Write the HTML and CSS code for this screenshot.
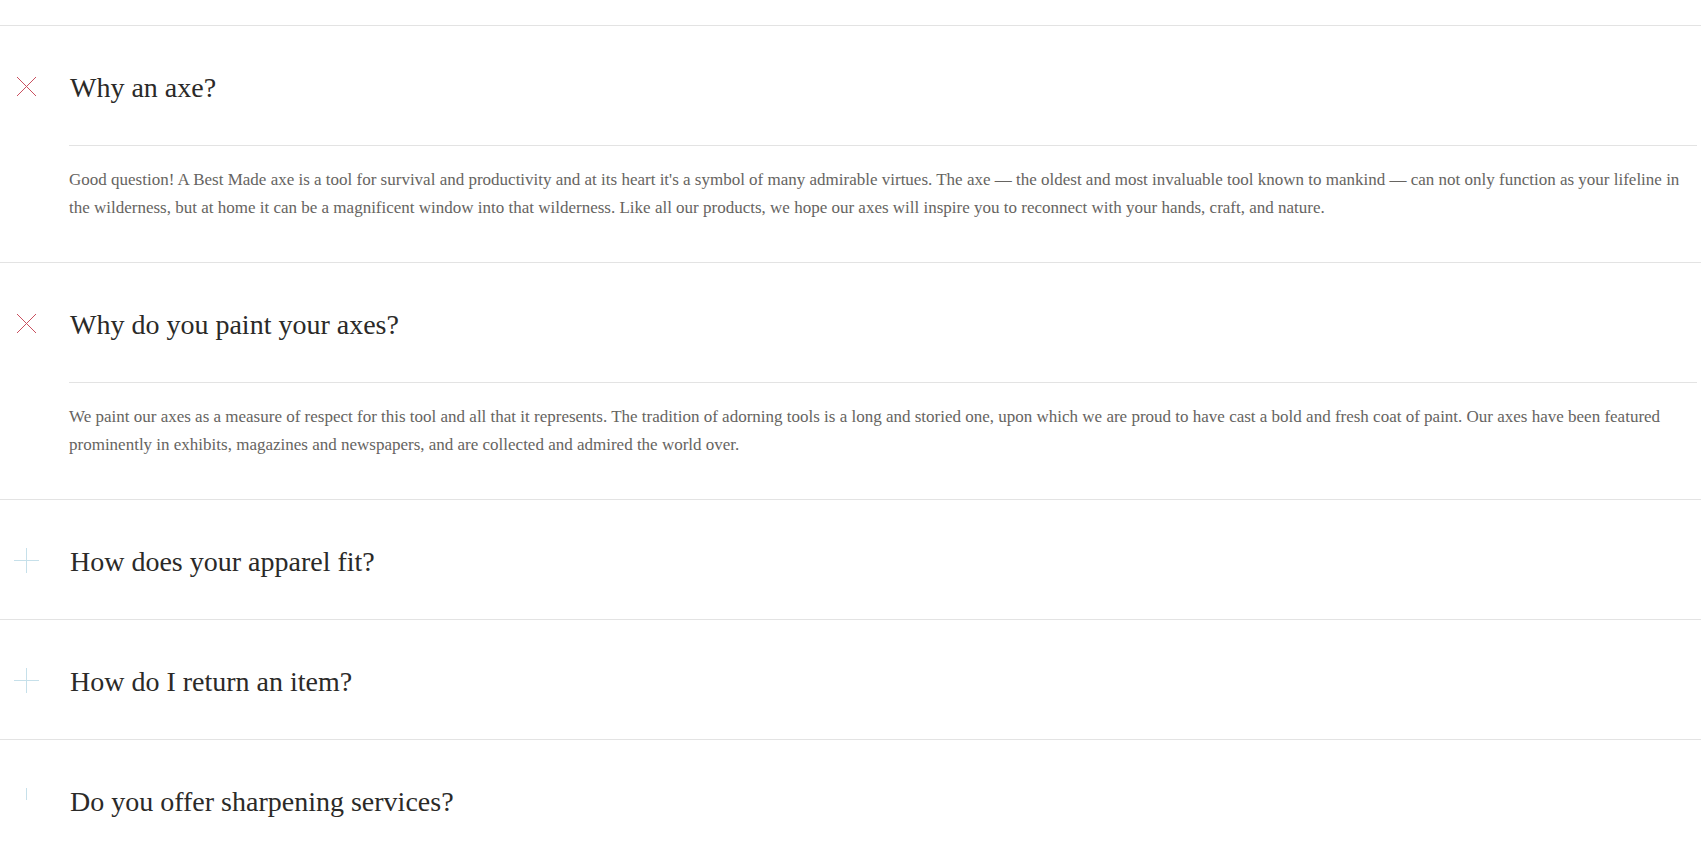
FILE: index.html
```html
<!DOCTYPE html>
<html lang="en">
<head>
    <meta charset="UTF-8">
    <meta name="viewport" content="width=device-width, initial-scale=1.0">
    <title>FAQ</title>
    <link rel="stylesheet" href="styles.css">
</head>
<body>
    <div class="faq">
        <div class="item open">
            <div class="question">
                <svg class="icon close" viewBox="0 0 25 25"><path d="M3 3 L22 22 M22 3 L3 22"/></svg>
                <h3>Why an axe?</h3>
            </div>
            <div class="answer">
                <p>Good question! A Best Made axe is a tool for survival and productivity and at its heart it's a symbol of many admirable virtues. The axe &mdash; the oldest and most invaluable tool known to mankind &mdash; can not only function as your lifeline in the wilderness, but at home it can be a magnificent window into that wilderness. Like all our products, we hope our axes will inspire you to reconnect with your hands, craft, and nature.</p>
            </div>
        </div>

        <div class="item open">
            <div class="question">
                <svg class="icon close" viewBox="0 0 25 25"><path d="M3 3 L22 22 M22 3 L3 22"/></svg>
                <h3>Why do you paint your axes?</h3>
            </div>
            <div class="answer">
                <p>We paint our axes as a measure of respect for this tool and all that it represents. The tradition of adorning tools is a long and storied one, upon which we are proud to have cast a bold and fresh coat of paint. Our axes have been featured prominently in exhibits, magazines and newspapers, and are collected and admired the world over.</p>
            </div>
        </div>

        <div class="item">
            <div class="question">
                <svg class="icon plus" viewBox="0 0 25 25"><path d="M12.5 0 V25 M0 12.5 H25"/></svg>
                <h3>How does your apparel fit?</h3>
            </div>
        </div>

        <div class="item">
            <div class="question">
                <svg class="icon plus" viewBox="0 0 25 25"><path d="M12.5 0 V25 M0 12.5 H25"/></svg>
                <h3>How do I return an item?</h3>
            </div>
        </div>

        <div class="item">
            <div class="question">
                <svg class="icon plus" viewBox="0 0 25 25"><path d="M12.5 0 V12"/></svg>
                <h3>Do you offer sharpening services?</h3>
            </div>
        </div>
    </div>
</body>
</html>
```

FILE: styles.css
```css
body {
    margin: 0;
    font-family: "Liberation Serif", "DejaVu Serif", serif;
    background: #fff;
}
.faq {
    margin-top: 25px;
}
.item {
    border-top: 1px solid #e3e3e3;
}
.question {
    display: flex;
    align-items: center;
    padding: 45px 0 40px;
}
.icon {
    width: 25px;
    height: 25px;
    margin: -3px 31px 0 14px;
    flex-shrink: 0;
    fill: none;
    stroke-width: 1;
}
.icon.close {
    stroke: #c9505f;
}
.icon.plus {
    stroke: #c6e0ea;
}
h3 {
    margin: 0;
    font-size: 28px;
    line-height: 34px;
    font-weight: normal;
    color: #2b2a28;
}
.answer {
    margin-left: 69px;
    margin-right: 4px;
    border-top: 1px solid #e3e3e3;
    padding: 20px 0 40px;
}
.answer p {
    margin: 0;
    font-size: 17px;
    line-height: 28px;
    color: #666461;
}
```
